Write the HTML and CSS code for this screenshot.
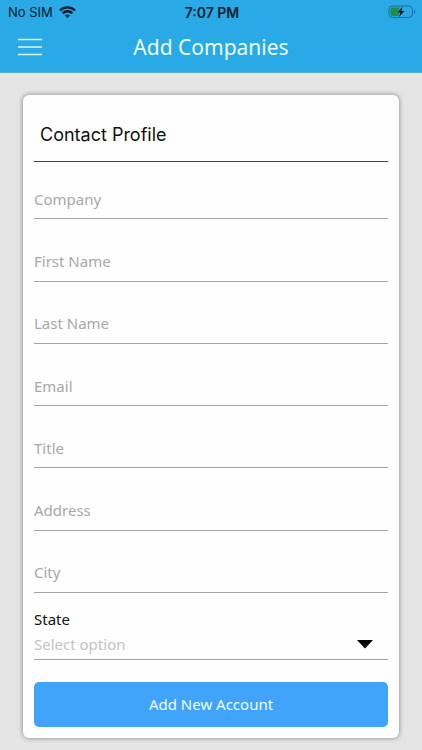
FILE: index.html
```html
<!DOCTYPE html>
<html lang="en">
<head>
    <meta charset="UTF-8">
    <meta name="viewport" content="width=device-width, initial-scale=1.0">
    <title>Add Companies</title>
    <link rel="stylesheet" href="styles.css">
</head>
<body>
    <header class="header">
        <div class="status-bar">
            <div class="carrier">
                <span>No SIM</span>
                <svg class="wifi" width="17" height="12" viewBox="0 0 17 12" fill="none" stroke="#06202e" stroke-width="2.4">
                    <path d="M1 4.4a10.8 10.8 0 0 1 15 0"/>
                    <path d="M3.7 7.3a6.8 6.8 0 0 1 9.6 0"/>
                    <path d="M8.5 12L5.9 9.6a3.8 3.8 0 0 1 5.2 0z" fill="#06202e" stroke="none"/>
                </svg>
            </div>
            <span class="clock">7:07 PM</span>
            <svg class="battery" width="28" height="14" viewBox="0 0 28 14">
                <rect x="1" y="1" width="23.5" height="11.5" rx="3.5" fill="none" stroke="#1b6f98"/>
                <path d="M26 4.8c1.8.6 1.8 3.4 0 4z" fill="#1b6f98"/>
                <path d="M4.5 2.5h7.5L8.5 7.8h2.6l-.8 3.2H4.5a2 2 0 0 1-2-2V4.5a2 2 0 0 1 2-2z" fill="#218c46"/>
                <path d="M14.5 1.8L9.3 7.5h3L11 12l5.3-6h-3z" fill="#04151f"/>
            </svg>
        </div>
        <div class="nav-bar">
            <button class="menu-button" type="button" aria-label="Menu">
                <svg width="24" height="18" viewBox="0 0 24 18" stroke="#d8fbff" stroke-width="1.6">
                    <path d="M0 1.5h24M0 9h24M0 16.5h24"/>
                </svg>
            </button>
            <h1>Add Companies</h1>
        </div>
    </header>

    <main class="content">
        <form class="card">
            <h2>Contact Profile</h2>

            <div class="fields">
                <div class="field"><input type="text" placeholder="Company" aria-label="Company"></div>
                <div class="field"><input type="text" placeholder="First Name" aria-label="First Name"></div>
                <div class="field"><input type="text" placeholder="Last Name" aria-label="Last Name"></div>
                <div class="field"><input type="email" placeholder="Email" aria-label="Email"></div>
                <div class="field"><input type="text" placeholder="Title" aria-label="Title"></div>
                <div class="field"><input type="text" placeholder="Address" aria-label="Address"></div>
                <div class="field"><input type="text" placeholder="City" aria-label="City"></div>
            </div>

            <div class="state">
                <label for="state">State</label>
                <div class="select-row">
                    <select id="state">
                        <option>Select option</option>
                    </select>
                    <svg class="arrow" width="16" height="9" viewBox="0 0 16 9">
                        <path d="M0 0h16L8 8.5z"/>
                    </svg>
                </div>
            </div>

            <button class="submit" type="submit">Add New Account</button>
        </form>
    </main>
</body>
</html>
```

FILE: styles.css
```css
* {
    box-sizing: border-box;
}
body {
    display: flex;
    flex-direction: column;
    min-height: 100vh;
    margin: 0;
    background: #e5e5e5;
    color: #111;
    font-family: 'Noto Sans', sans-serif;
    font-size: 15px;
}
input,
select,
button {
    margin: 0;
    padding: 0;
    border: 0;
    border-radius: 0;
    background: none;
    font: inherit;
}

/* Header */
.header {
    background: #29a9e5;
    border-bottom: 1px solid #5cabd0;
}
.status-bar {
    display: grid;
    grid-template-columns: 1fr auto 1fr;
    align-items: center;
    height: 24px;
    padding: 0 6px 0 8px;
    color: #06202e;
    font-family: Inter, sans-serif;
    font-size: 13px;
}
.carrier {
    display: flex;
    align-items: center;
    gap: 6px;
}
.clock {
    font-size: 14px;
    font-weight: 600;
}
.battery {
    justify-self: end;
}
.nav-bar {
    display: grid;
    grid-template-columns: 24px 1fr 24px;
    align-items: center;
    height: 48px;
    padding: 0 18px 2px;
}
.menu-button {
    display: flex;
}
.nav-bar h1 {
    margin: 0;
    color: #e9fcff;
    font-size: 21px;
    font-weight: 400;
    line-height: 28px;
    text-align: center;
}

/* Card */
.content {
    display: flex;
    flex: 1;
    padding: 22px 23px 12px;
}
.card {
    display: flex;
    flex: 1;
    flex-direction: column;
    min-width: 0;
    padding: 0 11px 11px;
    background: #fefefe;
    border-radius: 6px;
    box-shadow: 0 0 5px rgba(0, 0, 0, 0.45);
}
.card h2 {
    margin: 0;
    padding: 26px 6px 13px;
    border-bottom: 1px solid #444;
    font-family: Inter, sans-serif;
    font-size: 18px;
    font-weight: 400;
    line-height: 27px;
}
.fields {
    display: flex;
    flex: 1;
    flex-direction: column;
    gap: 5px;
}
.field {
    display: flex;
    flex: 1;
    align-items: flex-end;
}
.field input {
    width: 100%;
    height: 38px;
    padding-bottom: 2px;
    border-bottom: 1px solid #a5a5a5;
}
.field input::placeholder {
    color: #a8a8a8;
    opacity: 1;
}
.state {
    padding-top: 16px;
}
.state label {
    display: block;
    line-height: 20px;
}
.select-row {
    display: grid;
    align-items: center;
    height: 31px;
    border-bottom: 1px solid #a5a5a5;
}
.select-row select,
.select-row .arrow {
    grid-area: 1 / 1;
}
.select-row select {
    width: 100%;
    height: 30px;
    appearance: none;
    color: #c3c3c5;
}
.arrow {
    justify-self: end;
    margin-right: 15px;
    pointer-events: none;
}
.submit {
    height: 45px;
    margin-top: 22px;
    padding-bottom: 2px;
    background: #40a4fb;
    border-radius: 5px;
    color: #f0fcff;
}
```
